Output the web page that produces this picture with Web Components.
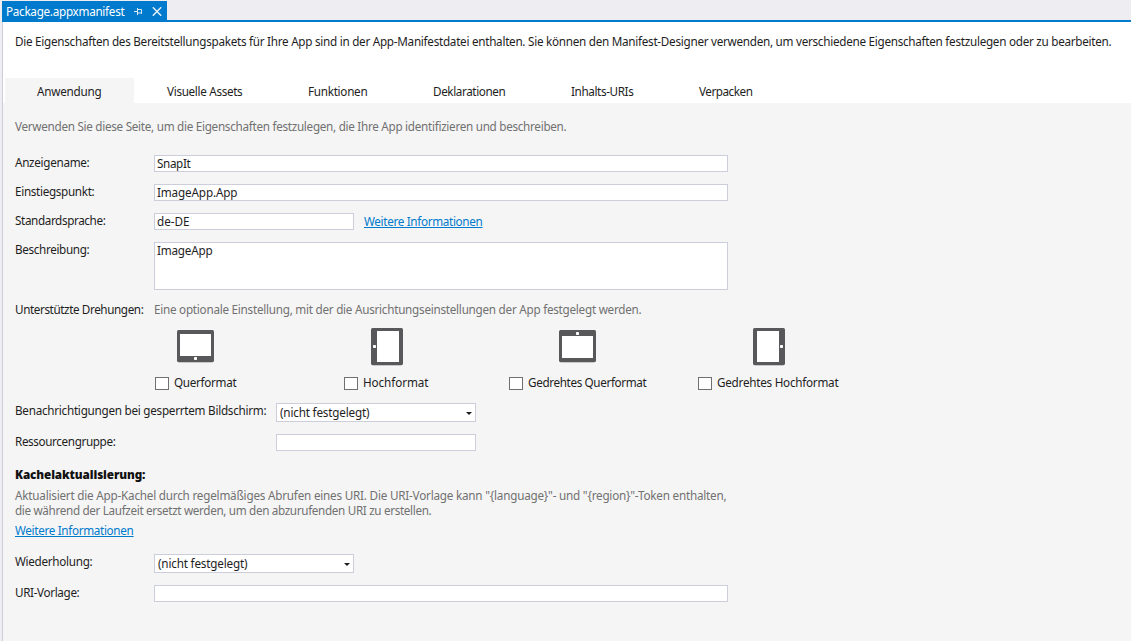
<!DOCTYPE html>
<html lang="de">
<head>
<meta charset="utf-8">
<title>Package.appxmanifest</title>
<style>
  body { margin: 0; height: 641px; overflow: hidden; background: #eeeef2; color: #1e1e1e; font: 11.7px/14px "Noto Sans", "Open Sans", sans-serif; }
</style>
</head>
<body>
<manifest-designer></manifest-designer>
<script>
const define = (name, html, setup) => {
  const template = document.createElement('template');
  template.innerHTML = html;
  customElements.define(name, class extends HTMLElement {
    connectedCallback() {
      if (this.shadowRoot) return;
      this.attachShadow({ mode: 'open' }).append(template.content.cloneNode(true));
      if (setup) setup(this, this.shadowRoot);
    }
  });
};

// A single line of text, tracked so that it fills the width in "w".
define('ui-text', `<style>
  :host { display: block; white-space: nowrap; height: 16px; flex: none; }
  :host([muted]) { color: #717171; }
  :host([strong]) { font-weight: 900; color: #111; }
  :host([link]) { color: #007acc; text-decoration: underline; text-underline-offset: 1px; text-decoration-thickness: 1px; text-decoration-skip-ink: none; }
  span { display: block; width: max-content; text-decoration: inherit; }
</style><span><slot></slot></span>`, (el, root) => {
  const w = +el.getAttribute('w'), span = root.querySelector('span');
  el.style.width = w + 'px';
  const natural = span.getBoundingClientRect().width;
  span.style.letterSpacing = (w - .6 - natural) / el.textContent.length + 'px';
});

define('doc-tab', `<style>
  :host { display: flex; align-items: center; box-sizing: border-box; width: 165px; height: 19px; margin: 1px 0 0 2px; padding: 3px 0 0 4px; background: #007acc; color: #fff; }
  svg { display: block; flex: none; margin-top: -2px; }
  .pin { margin-left: 9px; } .close { margin-left: 9px; }
</style><slot></slot>
<svg class="pin" width="9" height="9" viewBox="0 0 9 9" fill="none" stroke="#d6ebf8"><path d="M0 4.5H3M3.5 1V8M3.5 2.5H7.5V6.5M3.5 6H8"/></svg>
<svg class="close" width="10" height="9" viewBox="0 0 10 9" fill="none" stroke="#e2f1fa" stroke-width="1.5"><path d="M.8.3L9.2 8.7M9.2.3L.8 8.7"/></svg>`);

define('page-tabs', `<style>
  :host { display: flex; height: 25px; margin-left: 2px; }
  .first { width: 97px; padding: 6px 0 0 32px; background: #f5f5f5; }
  nav { display: flex; gap: 65px; padding: 6px 0 0 33px; }
</style><div class="first"><slot name="active"></slot></div><nav><slot></slot></nav>`);

define('form-row', `<style>
  :host { display: grid; grid-template-columns: var(--label, 139px) auto 1fr; column-gap: 0; align-items: start; }
</style><slot name="label"></slot><slot></slot>`);

define('text-box', `<style>
  :host { display: block; box-sizing: border-box; width: var(--w, 574px); height: var(--h, 17px); border: 1px solid #cccedb; background: #fff; padding-left: 2px; }
</style><slot></slot>`);

define('combo-box', `<style>
  :host { display: flex; justify-content: space-between; box-sizing: border-box; width: 200px; height: 19px; border: 1px solid #cccedb; background: #fff; padding: 1px 3px 0 3px; }
  svg { margin-top: 7px; }
</style><slot></slot><svg width="6" height="3" viewBox="0 0 6 3"><path d="M0 0H6L3 3Z" fill="#1e1e1e"/></svg>`);

define('tablet-icon', `<style>:host { display: block; height: 38px; } svg { display: block; }</style>`, (el, root) => {
  const shapes = {
    down: [37, 32, 3, 4, 31, 22, 17, 27],
    left: [32, 37, 6, 3, 22, 31, 2, 17],
    up: [37, 32, 3, 6, 31, 22, 17, 2],
    right: [32, 37, 4, 3, 22, 31, 27, 17]
  };
  const [w, h, x, y, sw, sh, dx, dy] = shapes[el.getAttribute('button')];
  if (w > h) el.style.paddingTop = '2px';
  root.innerHTML += `<svg width="${w}" height="${h + 1}" viewBox="0 0 ${w} ${h + 1}">
    <rect x="1" y="2" width="${w - 2}" height="${h - 1}" rx="1.5" fill="#c9c9ca"/>
    <rect width="${w}" height="${h}" rx="1.5" fill="#58585a"/>
    <rect x="${x}" y="${y}" width="${sw}" height="${sh}" fill="#fff"/>
    <rect x="${dx}" y="${dy}" width="3" height="3" rx=".7" fill="#fff"/></svg>`;
});

define('rotation-option', `<style>
  :host { display: block; }
  .icon { height: 38px; padding-left: var(--indent); }
  .check { display: flex; gap: 5px; margin-top: 9px; }
  i { box-sizing: border-box; width: 14px; height: 13px; margin-top: 2px; border: 1px solid #707070; background: #fff; }
</style><div class="icon"><slot name="icon"></slot></div><div class="check"><i></i><slot></slot></div>`);

define('manifest-designer', `<style>
  :host { display: flex; flex-direction: column; height: 641px; }
  .strip { height: 20px; }
  .rule { height: 2px; background: #007acc; }
  .rule { margin-left: 2px; }
  .page { flex: 1; display: flex; flex-direction: column; margin: 0 0 0 2px; border-left: 1px solid #cccedb; background: #fff; }
  header { box-sizing: border-box; height: 56px; padding: 12px 0 0 12px; }
  main { flex: 1; background: #f5f5f5; padding: 16px 0 0 12px; display: flex; flex-direction: column; }
  .basic { display: flex; flex-direction: column; gap: 12px; margin-top: 20px; }
  .basic form-row { min-height: 17px; }
  .lang { --w: 200px; }
  .lang ui-text[link] { margin-left: 10px; padding-top: 1px; }
  .tall { --h: 48px; }
  .rot { display: grid; grid-template-columns: 189px 165px 189px auto; margin: 10px 0 0 140px; }
  .lock { display: flex; flex-direction: column; gap: 12px; margin-top: 12px; --label: 261px; --w: 200px; }
  .tile { margin-top: 16px; }
  .copy { display: flex; flex-direction: column; margin-top: 5px; }
  .copy ui-text { height: 15px; }
  .more { margin-top: 5px; }
  .repeat { display: flex; flex-direction: column; gap: 12px; margin-top: 15px; }
</style>
<div class="strip"><doc-tab><ui-text w="119">Package.appxmanifest</ui-text></doc-tab></div>
<div class="rule"></div>
<div class="page">
  <header><ui-text w="1097">Die Eigenschaften des Bereitstellungspakets für Ihre App sind in der App-Manifestdatei enthalten. Sie können den Manifest-Designer verwenden, um verschiedene Eigenschaften festzulegen oder zu bearbeiten.</ui-text></header>
  <page-tabs>
    <ui-text slot="active" w="65">Anwendung</ui-text>
    <ui-text w="76">Visuelle Assets</ui-text>
    <ui-text w="60">Funktionen</ui-text>
    <ui-text w="73">Deklarationen</ui-text>
    <ui-text w="63">Inhalts-URIs</ui-text>
    <ui-text w="54">Verpacken</ui-text>
  </page-tabs>
  <main>
    <ui-text muted w="552">Verwenden Sie diese Seite, um die Eigenschaften festzulegen, die Ihre App identifizieren und beschreiben.</ui-text>
    <div class="basic">
      <form-row><ui-text slot="label" w="75">Anzeigename:</ui-text><text-box><ui-text w="34">SnapIt</ui-text></text-box></form-row>
      <form-row><ui-text slot="label" w="80">Einstiegspunkt:</ui-text><text-box><ui-text w="81">ImageApp.App</ui-text></text-box></form-row>
      <form-row class="lang"><ui-text slot="label" w="91">Standardsprache:</ui-text><text-box><ui-text w="33">de-DE</ui-text></text-box><ui-text link w="119">Weitere Informationen</ui-text></form-row>
      <form-row class="tall"><ui-text slot="label" w="75">Beschreibung:</ui-text><text-box><ui-text w="56">ImageApp</ui-text></text-box></form-row>
      <form-row style="min-height:16px"><ui-text slot="label" w="129">Unterstützte Drehungen:</ui-text><ui-text muted w="488">Eine optionale Einstellung, mit der die Ausrichtungseinstellungen der App festgelegt werden.</ui-text></form-row>
    </div>
    <div class="rot">
      <rotation-option style="--indent:22px"><tablet-icon slot="icon" button="down"></tablet-icon><ui-text w="63">Querformat</ui-text></rotation-option>
      <rotation-option style="--indent:27px"><tablet-icon slot="icon" button="left"></tablet-icon><ui-text w="66">Hochformat</ui-text></rotation-option>
      <rotation-option style="--indent:50px"><tablet-icon slot="icon" button="up"></tablet-icon><ui-text w="119">Gedrehtes Querformat</ui-text></rotation-option>
      <rotation-option style="--indent:55px"><tablet-icon slot="icon" button="right"></tablet-icon><ui-text w="122">Gedrehtes Hochformat</ui-text></rotation-option>
    </div>
    <div class="lock">
      <form-row><ui-text slot="label" w="252">Benachrichtigungen bei gesperrtem Bildschirm:</ui-text><combo-box><ui-text w="90">(nicht festgelegt)</ui-text></combo-box></form-row>
      <form-row><ui-text slot="label" w="101">Ressourcengruppe:</ui-text><text-box></text-box></form-row>
    </div>
    <ui-text class="tile" strong w="131">Kachelaktualisierung:</ui-text>
    <div class="copy">
      <ui-text muted w="712">Aktualisiert die App-Kachel durch regelmäßiges Abrufen eines URI. Die URI-Vorlage kann "{language}"- und "{region}"-Token enthalten,</ui-text>
      <ui-text muted w="417">die während der Laufzeit ersetzt werden, um den abzurufenden URI zu erstellen.</ui-text>
    </div>
    <ui-text class="more" link w="119">Weitere Informationen</ui-text>
    <div class="repeat">
      <form-row><ui-text slot="label" w="78">Wiederholung:</ui-text><combo-box><ui-text w="90">(nicht festgelegt)</ui-text></combo-box></form-row>
      <form-row><ui-text slot="label" w="65">URI-Vorlage:</ui-text><text-box></text-box></form-row>
    </div>
  </main>
</div>`);
</script>
</body>
</html>
